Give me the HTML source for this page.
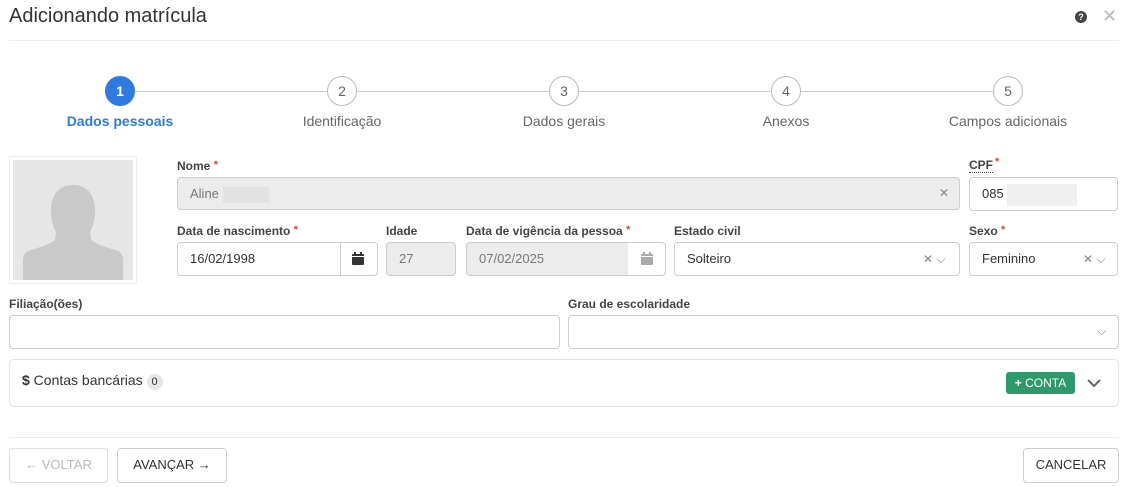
<!DOCTYPE html><html><head><meta charset="utf-8"><style>
*{box-sizing:border-box;margin:0;padding:0}
body{width:1128px;height:487px;background:#fff;font-family:"Liberation Sans",sans-serif;color:#333;position:relative;overflow:hidden;font-size:13px}
.a{position:absolute}
.c{position:absolute;width:30px;height:30px;border-radius:50%;border:1px solid #bbb;background:#fff;text-align:center;line-height:28px;font-size:14px;color:#666;top:76px}
.sl{position:absolute;top:113px;font-size:14px;color:#666;width:200px;text-align:center}
.lb{position:absolute;font-size:12px;color:#444;font-weight:bold}
.lb i{color:#e0452c;font-style:normal;font-size:11px;vertical-align:top}
.in{position:absolute;border:1px solid #ccc;border-radius:4px;background:#fff;font-size:13px;color:#333;padding-left:12px;line-height:31px}
.dis{background:#ececec;color:#777}
.sel{position:absolute;color:#888;font-size:12px}
.btn{position:absolute;border:1px solid #ccc;border-radius:4px;text-align:center;font-size:13px;line-height:32px;color:#333;background:#fff}
</style></head><body>
<div class="a" style="left:9px;top:5px;font-size:20px;color:#333">Adicionando matrícula</div>
<div class="a" style="left:1075px;top:11px;width:12px;height:12px;border-radius:50%;background:#444;color:#fff;font-size:9px;font-weight:bold;text-align:center;line-height:12px">?</div>
<div class="a" style="left:1102px;top:6px;font-size:18px;color:#bbb">✕</div>
<div class="a" style="left:9px;top:40px;width:1110px;height:1px;background:#eee"></div>
<div class="a" style="left:120px;top:91px;width:888px;height:1px;background:#ccc"></div>
<div class="c" style="left:105px;background:#2f7ae0;border-color:#2f7ae0;color:#fff;font-weight:bold">1</div>
<div class="c" style="left:327px">2</div><div class="c" style="left:549px">3</div><div class="c" style="left:771px">4</div><div class="c" style="left:993px">5</div>
<div class="sl" style="left:20px;color:#2f7ae0;font-weight:bold">Dados pessoais</div>
<div class="sl" style="left:242px">Identificação</div>
<div class="sl" style="left:464px">Dados gerais</div>
<div class="sl" style="left:686px">Anexos</div>
<div class="sl" style="left:908px">Campos adicionais</div>
<div class="a" style="left:9px;top:156px;width:128px;height:128px;border:1px solid #ececec"></div>
<svg class="a" style="left:13px;top:160px" width="120" height="120"><rect width="120" height="120" fill="#e6e6e6"/><path d="M60 25c-16 0-22 12-22 26 0 8 2 16 5 21l-1 8c-6 5-18 8-27 11-4 2-5 6-5 10v19h100v-19c0-4-1-8-5-10-9-3-21-6-27-11l-1-8c3-5 5-13 5-21 0-14-6-26-22-26z" fill="#c9c9c9"/></svg>
<div class="lb" style="left:177px;top:159px">Nome <i>*</i></div>
<div class="in dis" style="left:177px;top:177px;width:783px;height:33px">Aline <span style="display:inline-block;width:46px;height:16px;background:#e2e2e2;vertical-align:middle"></span></div>
<div class="sel" style="left:939px;top:186px">✕</div>
<div class="lb" style="left:969px;top:159px;border-bottom:1px dotted #444;line-height:13px">CPF</div><div class="lb" style="left:995px;top:156px"><i>*</i></div>
<div class="in" style="left:969px;top:177px;width:149px;height:34px;line-height:32px">085 <span style="display:inline-block;width:70px;height:22px;background:#f0f0f0;vertical-align:middle"></span></div>
<div class="lb" style="left:177px;top:224px">Data de nascimento <i>*</i></div>
<div class="in" style="left:177px;top:242px;width:201px;height:34px;line-height:32px">16/02/1998</div>
<div class="a" style="left:340px;top:242px;width:1px;height:34px;background:#ccc"></div>
<svg class="a" style="left:352px;top:252px" width="12" height="13"><rect x="0" y="2" width="12" height="11" rx="1" fill="#333"/><rect x="2" y="0" width="2" height="3" fill="#333"/><rect x="8" y="0" width="2" height="3" fill="#333"/><rect x="0" y="4" width="12" height="1" fill="#fff"/></svg>
<div class="lb" style="left:386px;top:224px">Idade</div>
<div class="in dis" style="left:386px;top:242px;width:70px;height:34px;line-height:32px">27</div>
<div class="lb" style="left:466px;top:224px">Data de vigência da pessoa <i>*</i></div>
<div class="in dis" style="left:466px;top:242px;width:200px;height:34px;line-height:32px">07/02/2025</div>
<div class="a" style="left:628px;top:243px;width:37px;height:32px;background:#fff;border-radius:0 4px 4px 0"></div>
<svg class="a" style="left:641px;top:252px" width="12" height="13"><rect x="0" y="2" width="12" height="11" rx="1" fill="#aaa"/><rect x="2" y="0" width="2" height="3" fill="#aaa"/><rect x="8" y="0" width="2" height="3" fill="#aaa"/><rect x="0" y="4" width="12" height="1" fill="#fff"/></svg>
<div class="lb" style="left:674px;top:224px">Estado civil</div>
<div class="in" style="left:674px;top:242px;width:286px;height:34px;line-height:32px">Solteiro</div>
<div class="sel" style="left:923px;top:252px">✕ ⌵</div>
<div class="lb" style="left:969px;top:224px">Sexo <i>*</i></div>
<div class="in" style="left:969px;top:242px;width:149px;height:34px;line-height:32px">Feminino</div>
<div class="sel" style="left:1083px;top:252px">✕ ⌵</div>
<div class="lb" style="left:9px;top:297px">Filiação(ões)</div>
<div class="in" style="left:9px;top:315px;width:551px;height:34px"></div>
<div class="lb" style="left:568px;top:297px">Grau de escolaridade</div>
<div class="in" style="left:568px;top:315px;width:551px;height:34px"></div>
<div class="sel" style="left:1097px;top:324px">⌵</div>
<div class="a" style="left:9px;top:359px;width:1110px;height:48px;border:1px solid #e3e3e3;border-radius:5px"></div>
<div class="a" style="left:22px;top:372px;font-size:14px;color:#333"><b>$</b> Contas bancárias <span style="display:inline-block;background:#e6e6e6;border-radius:8px;font-size:11px;padding:0 5px;line-height:16px">0</span></div>
<div class="a" style="left:1006px;top:372px;width:69px;height:22px;background:#2e9a6c;border-radius:3px;color:#fff;font-size:12px;text-align:center;line-height:22px"><b>+</b> CONTA</div>
<svg class="a" style="left:1087px;top:379px" width="14" height="9"><path d="M1 1l6 6 6-6" stroke="#666" stroke-width="2" fill="none"/></svg>
<div class="a" style="left:9px;top:437px;width:1110px;height:1px;background:#eee"></div>
<div class="btn" style="left:9px;top:448px;width:99px;height:35px;color:#bbb;border-color:#ddd">← VOLTAR</div>
<div class="btn" style="left:117px;top:448px;width:110px;height:35px">AVANÇAR <b>→</b></div>
<div class="btn" style="left:1023px;top:448px;width:96px;height:35px">CANCELAR</div>
</body></html>
